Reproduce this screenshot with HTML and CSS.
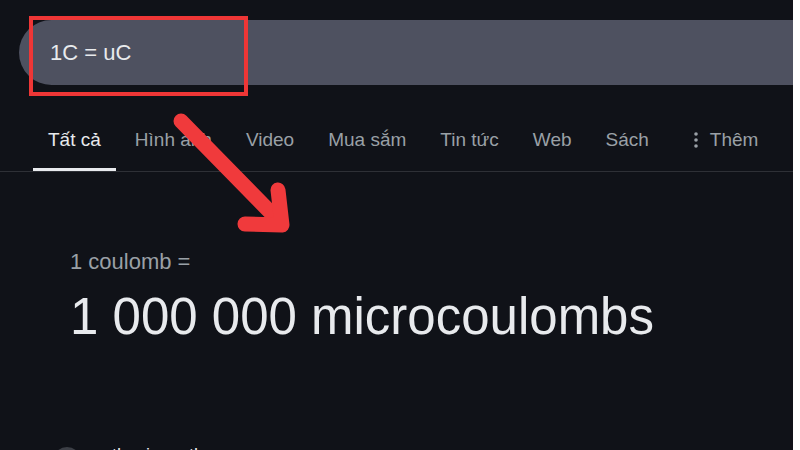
FILE: index.html
```html
<!DOCTYPE html>
<html lang="vi">
<head>
    <meta charset="UTF-8">
    <meta name="viewport" content="width=device-width, initial-scale=1.0">
    <title>1C = uC - Tìm kiếm</title>
    <link rel="stylesheet" href="styles.css">
</head>
<body>

    <div class="page">
        <header class="header">
            <div class="search-bar">
                <span class="query">1C = uC</span>
            </div>
        </header>

        <nav class="tabs">
            <a class="tab active">Tất cả</a>
            <a class="tab">Hình ảnh</a>
            <a class="tab">Video</a>
            <a class="tab">Mua sắm</a>
            <a class="tab">Tin tức</a>
            <a class="tab">Web</a>
            <a class="tab">Sách</a>
            <a class="tab more">
                <svg class="dots" width="4" height="16" viewBox="0 0 4 16">
                    <circle cx="2" cy="2" r="1.8" fill="#9aa0a6"/>
                    <circle cx="2" cy="8" r="1.8" fill="#9aa0a6"/>
                    <circle cx="2" cy="14" r="1.8" fill="#9aa0a6"/>
                </svg>
                Thêm
            </a>
        </nav>

        <section class="result">
            <div class="from">1 coulomb =</div>
            <div class="to">1 000 000 microcoulombs</div>
        </section>

        <div class="source">
            <span class="source-icon"></span>
            <span class="source-name">thuvienvatly</span>
        </div>

        <!-- annotation drawn over the screenshot -->
        <div class="highlight"></div>
        <svg class="arrow" width="793" height="450" viewBox="0 0 793 450">
            <g stroke="#f03a3c" stroke-width="15" stroke-linecap="round" stroke-linejoin="round" fill="none">
                <line x1="181" y1="121" x2="281" y2="223"/>
                <polyline points="278,190 282,225 245,224"/>
            </g>
        </svg>
    </div>

</body>
</html>
```

FILE: styles.css
```css
body {
    margin: 0;
    background-color: #ffffff;
    font-family: "Liberation Sans", Arial, sans-serif;
}
.page {
    position: relative;
    width: 793px;
    height: 450px;
    overflow: hidden;
    background-color: #101218;
}
.header {
    padding: 20px 0 0 19px;
}
.search-bar {
    display: flex;
    align-items: center;
    height: 65px;
    padding-left: 31px;
    background-color: #4e5160;
    border-radius: 33px 0 0 33px;
}
.query {
    font-size: 22px;
    color: #e8eaed;
}
.tabs {
    display: flex;
    gap: 4px;
    margin-top: 20px;
    padding-left: 33px;
    border-bottom: 1px solid #2e3036;
}
.tab {
    display: flex;
    align-items: center;
    gap: 12px;
    padding: 23px 15px 16px;
    font-size: 19px;
    line-height: 24px;
    color: #9aa0a6;
    border-bottom: 3px solid transparent;
}
.tab.active {
    color: #e8eaed;
    border-bottom-color: #e8eaed;
}
.tab.more {
    margin-left: 11px;
}
.result {
    padding: 76px 0 0 70px;
}
.from {
    font-size: 22px;
    line-height: 28px;
    color: #9aa0a6;
}
.to {
    margin-top: 11px;
    font-size: 51px;
    line-height: 60px;
    color: #e8eaed;
}
.source {
    display: flex;
    align-items: flex-start;
    gap: 31px;
    margin-top: 97px;
    padding-left: 53px;
}
.source-icon {
    width: 28px;
    height: 28px;
    margin-top: 3px;
    border-radius: 50%;
    background-color: #3c3f46;
}
.source-name {
    font-size: 18px;
    line-height: 22px;
    color: #e8eaed;
}
.highlight {
    position: absolute;
    left: 29px;
    top: 16px;
    width: 211px;
    height: 72px;
    border: 4px solid #ee3636;
}
.arrow {
    position: absolute;
    left: 0;
    top: 0;
}
```
